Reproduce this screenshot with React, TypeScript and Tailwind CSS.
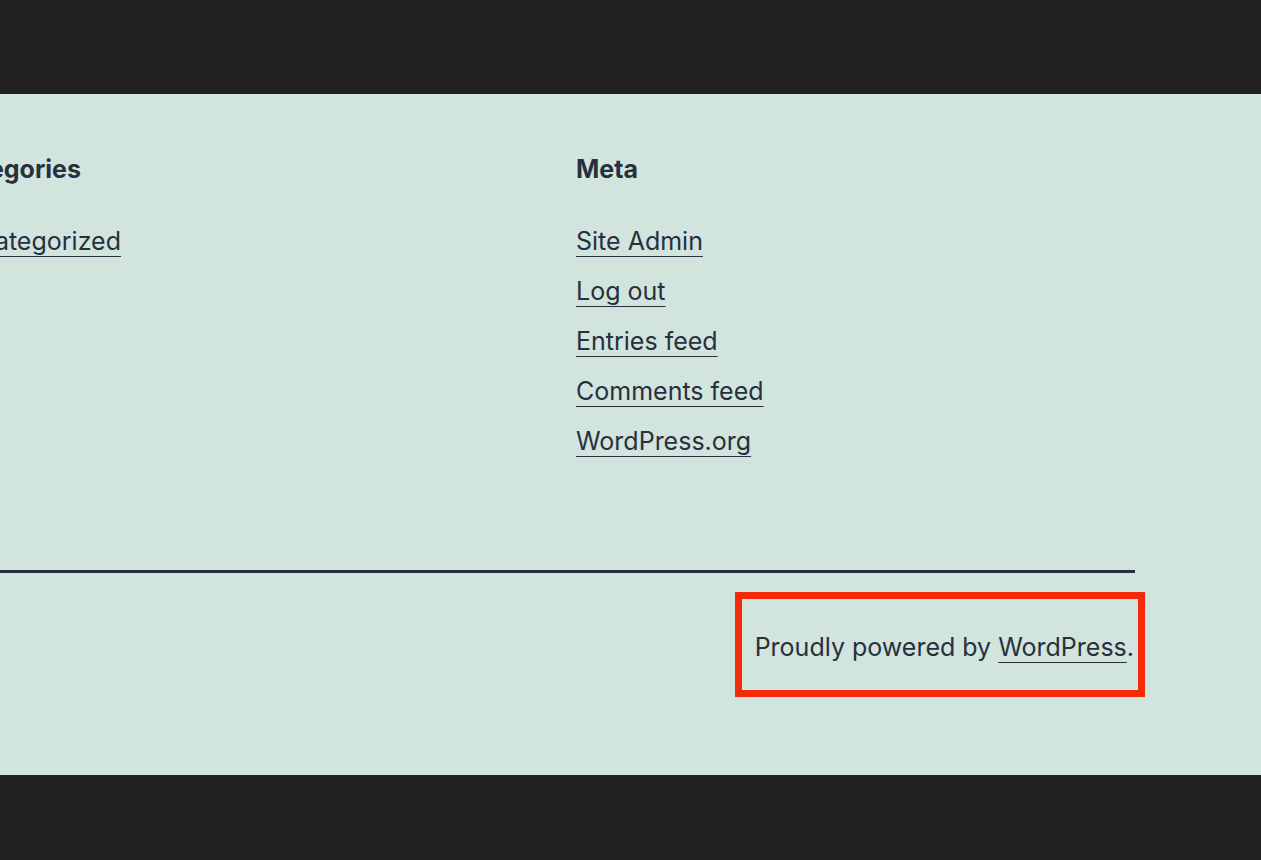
import React from 'react';

const metaLinks = ['Site Admin', 'Log out', 'Entries feed', 'Comments feed', 'WordPress.org'];

export default function App() {
  return (
    <div
      className="w-[1261px] h-[860px] bg-[#212121] flex flex-col overflow-hidden"
      style={{ fontFamily: 'Inter, "Noto Sans", sans-serif' }}
    >
      <div className="h-[94px] shrink-0" />
      <div className="h-[681px] shrink-0 bg-[#d1e4dd] text-[#28303d] overflow-hidden">
        <div className="flex pt-[60px]">
          <div className="w-[629px] -ml-[53px] shrink-0">
            <h2 className="text-[25px] leading-[30px] font-bold">Categories</h2>
            <ul className="mt-[32px]">
              <li className="text-[25px] leading-[50px]">
                <a className="underline underline-offset-[6px] decoration-1">Uncategorized</a>
              </li>
            </ul>
          </div>
          <div>
            <h2 className="text-[25px] leading-[30px] font-bold">Meta</h2>
            <ul className="mt-[32px]">
              {metaLinks.map((l) => (
                <li key={l} className="text-[25px] leading-[50px]">
                  <a className="underline underline-offset-[6px] decoration-1">{l}</a>
                </li>
              ))}
            </ul>
          </div>
        </div>
        <div className="mt-[104px] w-[1135px] h-[3px] bg-[#28303d]" />
        <div className="w-[1145px] flex justify-end mt-[19px]">
          <div className="border-[7px] border-[#f42a0b] pl-[13px] pr-[4px] pt-[33px] pb-[28px]">
            <p className="text-[25px] leading-[30px]">
              Proudly powered by{' '}
              <a className="underline underline-offset-[6px] decoration-1">WordPress</a>.
            </p>
          </div>
        </div>
      </div>
      <div className="flex-1" />
    </div>
  );
}
